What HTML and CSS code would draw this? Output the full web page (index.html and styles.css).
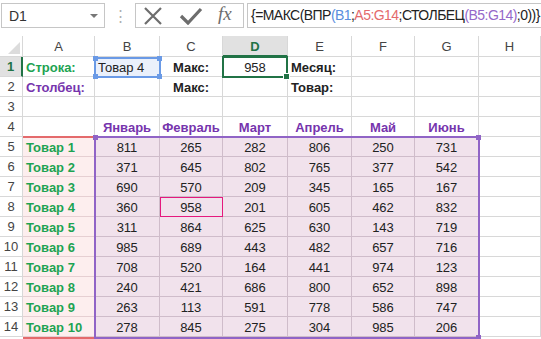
FILE: index.html
```html
<!DOCTYPE html>
<html lang="ru">
<head>
    <meta charset="UTF-8">
    <title>Excel - МАКС ВПР</title>
    <link rel="stylesheet" href="styles.css">
</head>
<body>
    <div class="toolbar">
        <div class="namebox">
            <span>D1</span>
            <span class="drop"></span>
        </div>
        <div class="dots">⋮</div>
        <div class="buttons">
            <svg width="22" height="18" viewBox="0 0 22 18"><path d="M3 1 L19 17 M19 1 L3 17" stroke="#6d6d6d" stroke-width="2.2" fill="none"/></svg>
            <svg width="24" height="18" viewBox="0 0 24 18"><path d="M2 9 L9 16 L22 2" stroke="#6d6d6d" stroke-width="3.2" fill="none"/></svg>
            <span class="fx">fx</span>
        </div>
        <div class="formula">{=МАКС(ВПР<span class="f-blue">(B1</span>;<span class="f-red">A5:G14</span>;СТОЛБЕЦ<span class="f-purple">(B5:G14)</span>;0))}</div>
    </div>

    <div class="sheet">
        <div class="grid">
            <div class="ch corner"><span class="tri"></span></div>
            <div class="ch">A</div><div class="ch">B</div><div class="ch">C</div>
            <div class="ch active">D</div>
            <div class="ch">E</div><div class="ch">F</div><div class="ch">G</div><div class="ch">H</div>

            <div class="rh active">1</div>
            <div class="c l b green">Строка:</div>
            <div class="c l sel">Товар 4</div>
            <div class="c b">Макс:</div>
            <div class="c">958</div>
            <div class="c l b">Месяц:</div>
            <div class="c"></div><div class="c"></div><div class="c"></div>

            <div class="rh">2</div>
            <div class="c l b purple">Столбец:</div>
            <div class="c"></div>
            <div class="c b">Макс:</div>
            <div class="c"></div>
            <div class="c l b">Товар:</div>
            <div class="c"></div><div class="c"></div><div class="c"></div>

            <div class="rh">3</div>
            <div class="c"></div><div class="c"></div><div class="c"></div><div class="c"></div>
            <div class="c"></div><div class="c"></div><div class="c"></div><div class="c"></div>

            <div class="rh">4</div>
            <div class="c"></div>
            <div class="c b purple">Январь</div>
            <div class="c b purple">Февраль</div>
            <div class="c b purple">Март</div>
            <div class="c b purple">Апрель</div>
            <div class="c b purple">Май</div>
            <div class="c b purple">Июнь</div>
            <div class="c"></div>

            <div class="rh">5</div><div class="c l b green fa">Товар 1</div>
            <div class="c fd">811</div><div class="c fd">265</div><div class="c fd">282</div><div class="c fd">806</div><div class="c fd">250</div><div class="c fd">731</div><div class="c"></div>

            <div class="rh">6</div><div class="c l b green fa">Товар 2</div>
            <div class="c fd">371</div><div class="c fd">645</div><div class="c fd">802</div><div class="c fd">765</div><div class="c fd">377</div><div class="c fd">542</div><div class="c"></div>

            <div class="rh">7</div><div class="c l b green fa">Товар 3</div>
            <div class="c fd">690</div><div class="c fd">570</div><div class="c fd">209</div><div class="c fd">345</div><div class="c fd">165</div><div class="c fd">167</div><div class="c"></div>

            <div class="rh">8</div><div class="c l b green fa">Товар 4</div>
            <div class="c fd">360</div><div class="c fd">958</div><div class="c fd">201</div><div class="c fd">605</div><div class="c fd">462</div><div class="c fd">832</div><div class="c"></div>

            <div class="rh">9</div><div class="c l b green fa">Товар 5</div>
            <div class="c fd">311</div><div class="c fd">864</div><div class="c fd">625</div><div class="c fd">630</div><div class="c fd">143</div><div class="c fd">719</div><div class="c"></div>

            <div class="rh">10</div><div class="c l b green fa">Товар 6</div>
            <div class="c fd">985</div><div class="c fd">689</div><div class="c fd">443</div><div class="c fd">482</div><div class="c fd">657</div><div class="c fd">716</div><div class="c"></div>

            <div class="rh">11</div><div class="c l b green fa">Товар 7</div>
            <div class="c fd">708</div><div class="c fd">520</div><div class="c fd">164</div><div class="c fd">441</div><div class="c fd">974</div><div class="c fd">123</div><div class="c"></div>

            <div class="rh">12</div><div class="c l b green fa">Товар 8</div>
            <div class="c fd">240</div><div class="c fd">421</div><div class="c fd">686</div><div class="c fd">800</div><div class="c fd">652</div><div class="c fd">898</div><div class="c"></div>

            <div class="rh">13</div><div class="c l b green fa">Товар 9</div>
            <div class="c fd">263</div><div class="c fd">113</div><div class="c fd">591</div><div class="c fd">778</div><div class="c fd">586</div><div class="c fd">747</div><div class="c"></div>

            <div class="rh">14</div><div class="c l b green fa">Товар 10</div>
            <div class="c fd">278</div><div class="c fd">845</div><div class="c fd">275</div><div class="c fd">304</div><div class="c fd">985</div><div class="c fd">206</div><div class="c"></div>
        </div>

        <!-- range highlights drawn over the grid -->
        <div class="range-red"></div>
        <div class="range-purple">
            <span class="h h-tl"></span><span class="h h-tr"></span><span class="h h-br"></span>
        </div>
        <div class="range-blue">
            <span class="h h-tl"></span><span class="h h-tr"></span><span class="h h-bl"></span><span class="h h-br"></span>
        </div>
        <div class="active-cell"><span class="fill-handle"></span></div>
        <div class="found-cell"></div>
    </div>
</body>
</html>
```

FILE: styles.css
```css
body {
  margin:0;
  width:541px;
  height:339px;
  overflow:hidden;
  background:#fff;
  font-family:"Liberation Sans", Arial, sans-serif;
  color:#222;
}

/* formula bar */
.toolbar {
  height:36px;
  display:flex;
  align-items:flex-start;
  padding-top:3px;
  padding-left:1px;
  box-sizing:border-box;
}
.namebox {
  width:104px;
  height:25px;
  box-sizing:border-box;
  border:1px solid #c6c6c6;
  display:flex;
  align-items:center;
  justify-content:space-between;
  padding:0 6px 0 7px;
  font-size:14px;
  color:#333;
}
.namebox .drop {
  width:0;
  height:0;
  border-left:4px solid transparent;
  border-right:4px solid transparent;
  border-top:4px solid #777;
}
.dots {
  width:30px;
  height:25px;
  line-height:25px;
  text-align:center;
  color:#b0b0b0;
  font-size:15px;
}
.buttons {
  width:109px;
  height:25px;
  box-sizing:border-box;
  border:1px solid #c6c6c6;
  display:flex;
  align-items:center;
  gap:15px;
  padding-left:6px;
}
.buttons .fx {
  font-family:"Liberation Serif", serif;
  font-style:italic;
  font-size:19px;
  color:#6d6d6d;
  margin-top:-3px;
}
.formula {
  flex:1;
  margin-left:3px;
  height:25px;
  box-sizing:border-box;
  border:1px solid #c6c6c6;
  border-right:none;
  padding-left:3px;
  font-size:14px;
  letter-spacing:-0.55px;
  line-height:23px;
  white-space:nowrap;
  color:#222;
}
.f-blue { color:#5a8ede; }
.f-red { color:#e46a6c; }
.f-purple { color:#9568c9; }

/* sheet */
.sheet {
  position:relative;
}
.grid {
  display:grid;
  grid-template-columns:23px 72px 65px 63px 65px 64px 63px 64px 62px;
  grid-template-rows:21px repeat(14, 20px);
}
.grid > div {
  box-sizing:border-box;
  border-right:1px solid #d8d8d8;
  border-bottom:1px solid #d8d8d8;
  display:flex;
  align-items:center;
  justify-content:center;
  font-size:13px;
  white-space:nowrap;
  overflow:hidden;
}
.ch {
  color:#444;
  font-size:13px;
  padding-top:1px;
}
.ch.active {
  background:#e1e1e1;
  color:#217346;
  font-weight:bold;
  border-bottom:2px solid #217346 !important;
}
.corner {
  justify-content:flex-end !important;
  align-items:flex-end !important;
  padding:0 2px 2px 0;
}
.tri {
  width:0;
  height:0;
  border-left:12px solid transparent;
  border-bottom:12px solid #dcdcdc;
}
.rh {
  color:#444;
  font-size:13px;
}
.rh.active {
  background:#e1e1e1;
  color:#217346;
  font-weight:bold;
  border-right:2px solid #217346 !important;
}
.c {
  padding-top:1px;
}
.c.l {
  justify-content:flex-start !important;
  padding-left:3px;
}
.b { font-weight:bold; }
.green { color:#1da352; }
.purple { color:#7634ad; }
.sel { background:#eaf0fb; }
.fa {
  background:#fdeeee;
  border-color:#e6cfd2 !important;
}
.fd {
  background:#f1e2ec;
  border-color:#cfbcca !important;
}

/* overlays */
.range-red {
  position:absolute;
  left:23px;
  top:100px;
  width:72px;
  height:203px;
  box-sizing:border-box;
  border-top:2px solid #e46a6c;
  border-bottom:2px solid #e46a6c;
}
.range-purple {
  position:absolute;
  left:94px;
  top:100px;
  width:386px;
  height:203px;
  box-sizing:border-box;
  border:2px solid #9064c6;
}
.range-blue {
  position:absolute;
  left:94px;
  top:21px;
  width:67px;
  height:21px;
  box-sizing:border-box;
  border:2px solid #6a9ae6;
}
.h {
  position:absolute;
  width:5px;
  height:5px;
  background:inherit;
}
.range-purple .h { background:#9064c6; }
.range-blue .h { background:#6a9ae6; }
.h-tl { left:-3px; top:-3px; }
.h-tr { right:-3px; top:-3px; }
.h-bl { left:-3px; bottom:-3px; }
.h-br { right:-3px; bottom:-3px; }
.active-cell {
  position:absolute;
  left:222px;
  top:20px;
  width:66px;
  height:22px;
  box-sizing:border-box;
  border:2px solid #217346;
}
.fill-handle {
  position:absolute;
  right:-4px;
  bottom:-4px;
  width:5px;
  height:5px;
  background:#217346;
  border:1px solid #fff;
}
.found-cell {
  position:absolute;
  left:160px;
  top:161px;
  width:63px;
  height:20px;
  box-sizing:border-box;
  border:1px solid #e5197e;
}
```
